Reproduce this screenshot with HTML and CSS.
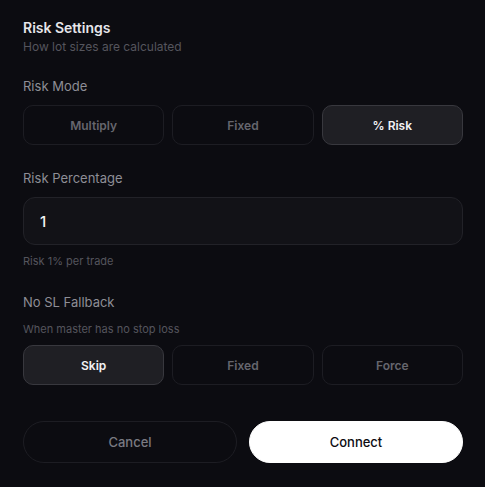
FILE: index.html
```html
<!DOCTYPE html>
<html>
<head>
<meta charset="utf-8">
<link rel="stylesheet" href="styles.css">
</head>
<body>
<div class="panel">
  <div class="header">
    <div class="title">Risk Settings</div>
    <div class="subtitle">How lot sizes are calculated</div>
  </div>

  <div class="section first">
    <div class="label">Risk Mode</div>
    <div class="seg">
      <button class="opt">Multiply</button>
      <button class="opt">Fixed</button>
      <button class="opt active">% Risk</button>
    </div>
  </div>

  <div class="section">
    <div class="label">Risk Percentage</div>
    <div class="input">1</div>
    <div class="hint">Risk 1% per trade</div>
  </div>

  <div class="section">
    <div class="label">No SL Fallback</div>
    <div class="desc">When master has no stop loss</div>
    <div class="seg">
      <button class="opt active">Skip</button>
      <button class="opt">Fixed</button>
      <button class="opt">Force</button>
    </div>
  </div>

  <div class="actions">
    <button class="btn cancel">Cancel</button>
    <button class="btn connect">Connect</button>
  </div>
</div>
</body>
</html>
```

FILE: styles.css
```css
html, body {
  margin: 0;
  padding: 0;
  background: #0c0c11;
  font-family: Inter, "Noto Sans", sans-serif;
}

.panel {
  padding: 18px 22px 0 23px;
}

.title {
  font-size: 14px;
  font-weight: 600;
  line-height: 20px;
  color: #e6e6ea;
}

.subtitle {
  margin-top: 1px;
  font-size: 12px;
  line-height: 16px;
  color: #55555d;
}

.section {
  margin-top: 24px;
}

.section.first {
  margin-top: 22px;
}

.label {
  font-size: 13px;
  line-height: 18px;
  color: #8e8e96;
}

.seg {
  display: grid;
  grid-template-columns: 1fr 1fr 1fr;
  gap: 8px;
  margin-top: 10px;
}

.desc + .seg {
  margin-top: 8px;
}

.opt {
  height: 40px;
  border: 1px solid #1d1d23;
  border-radius: 10px;
  background: transparent;
  font-family: inherit;
  font-size: 12px;
  font-weight: 600;
  color: #66666e;
  padding: 0;
}

.opt.active {
  background: #1f1f24;
  border-color: #38383e;
  color: #f2f2f4;
}

.input {
  margin-top: 10px;
  height: 48px;
  box-sizing: border-box;
  border: 1px solid #222228;
  border-radius: 12px;
  background: #121217;
  padding: 0 16px;
  display: flex;
  align-items: center;
  font-size: 15px;
  font-weight: 500;
  color: #f2f2f4;
}

.hint {
  margin-top: 8px;
  font-size: 11px;
  line-height: 16px;
  color: #55555d;
}

.desc {
  margin-top: 10px;
  font-size: 11px;
  line-height: 16px;
  color: #55555d;
}

.actions {
  display: grid;
  grid-template-columns: 1fr 1fr;
  gap: 12px;
  margin-top: 36px;
}

.btn {
  height: 42px;
  border-radius: 21px;
  font-family: inherit;
  font-size: 13px;
  font-weight: 500;
  padding: 0;
}

.cancel {
  background: transparent;
  border: 1px solid #1d1d23;
  color: #7a7a82;
}

.connect {
  background: #ffffff;
  border: 1px solid #ffffff;
  color: #0c0c11;
}
```
